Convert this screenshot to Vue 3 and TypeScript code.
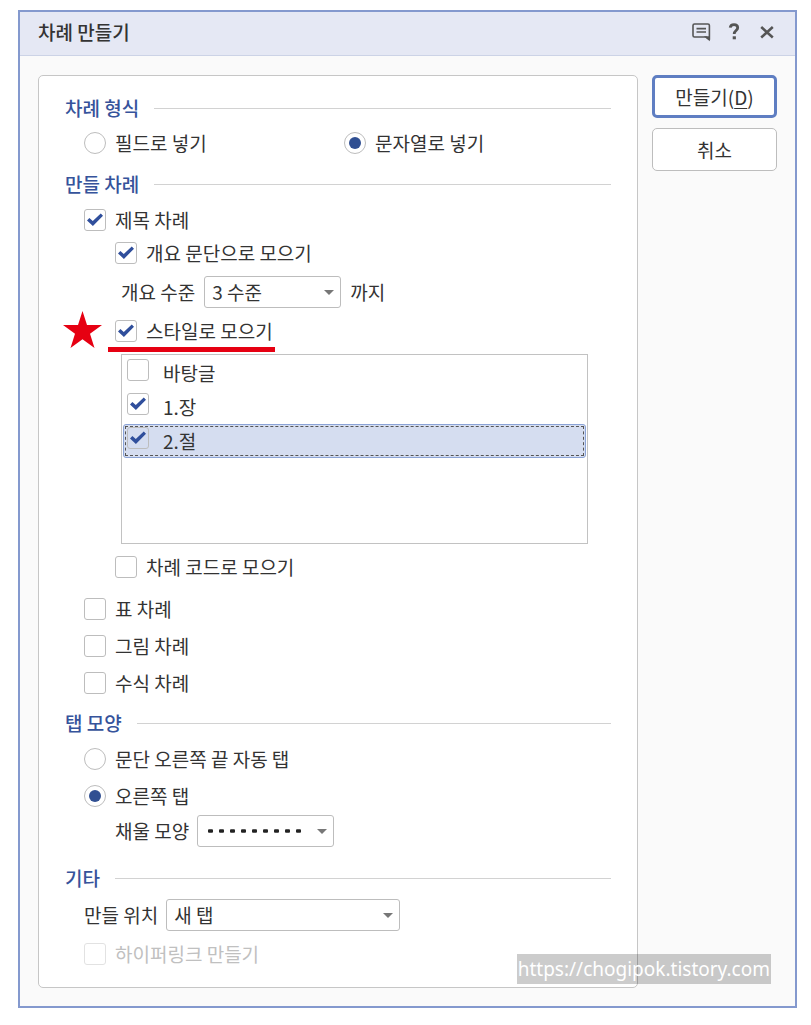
<script setup lang="ts">
import { ref } from 'vue'

interface StyleItem {
  id: string
  name: string
  checked: boolean
}

const format = ref<'field' | 'string'>('string')
const titleToc = ref(true)
const byOutline = ref(true)
const byStyle = ref(true)
const byCode = ref(false)
const level = ref('3 수준')
const levels = ['1 수준', '2 수준', '3 수준', '4 수준', '5 수준']
const styles = ref<StyleItem[]>([
  { id: 'normal', name: '바탕글', checked: false },
  { id: 'chapter', name: '1.장', checked: true },
  { id: 'section', name: '2.절', checked: true },
])
const selected = ref('section')
const others = ref([
  { id: 'table', name: '표 차례', checked: false },
  { id: 'figure', name: '그림 차례', checked: false },
  { id: 'equation', name: '수식 차례', checked: false },
])
const tab = ref<'auto' | 'right'>('right')
const place = ref('새 탭')
const hyperlink = ref(false)
</script>

<template>
  <div class="page">
    <section class="dialog" role="dialog" aria-labelledby="dialog-title">
      <header class="titlebar">
        <h1 id="dialog-title">차례 만들기</h1>
        <div class="tools">
          <button type="button" aria-label="의견">
            <svg width="20" height="20" viewBox="0 0 20 20" fill="none" stroke="#555" stroke-width="1.6">
              <path d="M3.5 2h13.400q1.500 0 1.500 1.500v14l-3.400-2.500H3.500Q2 15 2 13.500V3.500Q2 2 3.500 2Z" stroke-linejoin="round" />
              <path d="M5.500 6.600h9.500M5.500 10h9.500" />
              <path d="M15 15l3 2.500V15Z" fill="#555" />
            </svg>
          </button>
          <button type="button" aria-label="도움말">
            <svg width="20" height="20" viewBox="0 0 20 20" fill="none" stroke="#555" stroke-width="2.800">
              <path d="M6.200 5.600C6.500 3.200 8 2.600 10 2.600c2.300 0 3.700 1.200 3.700 3.100 0 2.900-3.500 2.800-3.500 6.300" />
              <path d="M8.700 15.800h3.200" stroke-width="3" />
            </svg>
          </button>
          <button type="button" aria-label="닫기">
            <svg width="20" height="20" viewBox="0 0 20 20" fill="none" stroke="#555" stroke-width="2.500">
              <path d="M4.200 5l11.600 10.500M15.800 5L4.200 15.500" />
            </svg>
          </button>
        </div>
      </header>

      <main class="body">
        <form class="panel" @submit.prevent>
          <h2 class="heading">차례 형식</h2>
          <div class="row formats">
            <label class="option"><input v-model="format" type="radio" name="format" value="field" />필드로 넣기</label>
            <label class="option"><input v-model="format" type="radio" name="format" value="string" />문자열로 넣기</label>
          </div>

          <h2 class="heading second">만들 차례</h2>
          <div class="row"><label class="option"><input v-model="titleToc" type="checkbox" />제목 차례</label></div>
          <div class="nested">
            <label class="option"><input v-model="byOutline" type="checkbox" />개요 문단으로 모으기</label>
            <div class="field level">
              <label for="level">개요 수준</label>
              <span class="combo">
                <select id="level" v-model="level">
                  <option v-for="l in levels" :key="l">{{ l }}</option>
                </select>
              </span>
              <span>까지</span>
            </div>
            <div class="marked">
              <svg class="star" width="40" height="38" viewBox="0 0 40 38" aria-hidden="true">
                <path d="M19.500 0L24 14H39L27 22.800L31.500 37L19.500 28.300L7.500 37L12 22.800L0 14H15Z" fill="#e60012" />
              </svg>
              <label class="option"><input v-model="byStyle" type="checkbox" />스타일로 모으기</label>
            </div>
            <ul class="list">
              <li
                v-for="s in styles"
                :key="s.id"
                :class="{ selected: s.id === selected }"
                @click="selected = s.id"
              >
                <label><input v-model="s.checked" type="checkbox" />{{ s.name }}</label>
              </li>
            </ul>
            <label class="option"><input v-model="byCode" type="checkbox" />차례 코드로 모으기</label>
          </div>
          <div class="others">
            <label v-for="o in others" :key="o.id" class="option"><input v-model="o.checked" type="checkbox" />{{ o.name }}</label>
          </div>

          <h2 class="heading third">탭 모양</h2>
          <div class="tabs">
            <label class="option"><input v-model="tab" type="radio" name="tab" value="auto" />문단 오른쪽 끝 자동 탭</label>
            <label class="option"><input v-model="tab" type="radio" name="tab" value="right" />오른쪽 탭</label>
          </div>
          <div class="field fill">
            <label for="fill">채울 모양</label>
            <span class="combo">
              <select id="fill">
                <option value="dotted" aria-label="점선"></option>
              </select>
              <svg class="dots" width="96" height="4" viewBox="0 0 96 4" aria-hidden="true">
                <rect v-for="n in 9" :key="n" :x="(n - 1) * 11" y="0.300" width="5" height="3.400" rx="1" fill="#222" />
              </svg>
            </span>
          </div>

          <h2 class="heading fourth">기타</h2>
          <div class="field place">
            <label for="place">만들 위치</label>
            <span class="combo">
              <select id="place" v-model="place">
                <option>새 탭</option>
                <option>현재 문서</option>
              </select>
            </span>
          </div>
          <div class="link"><label class="option disabled"><input v-model="hyperlink" type="checkbox" disabled />하이퍼링크 만들기</label></div>
        </form>

        <aside class="actions">
          <button type="button" class="primary">만들기(<u>D</u>)</button>
          <button type="button">취소</button>
        </aside>
      </main>
      <a class="watermark" href="https://chogipok.tistory.com">https://chogipok.tistory.com</a>
    </section>
  </div>
</template>

<style>
body {
  margin: 0;
  background: #fff;
}
</style>

<style scoped>
* {
  box-sizing: border-box;
}
.page {
  padding: 10px 14px 16px 18px;
  font-family: "Noto Sans CJK KR", "Noto Sans", sans-serif;
  font-size: 19px;
  line-height: 28px;
  color: #333;
}
.dialog {
  position: relative;
  border: 2px solid #8499ce;
  background: #fafafa;
}
.titlebar {
  display: flex;
  align-items: flex-start;
  justify-content: space-between;
  height: 44px;
  padding: 6px 18px 0;
  background: #e5e8f4;
  border-bottom: 1px solid #ccd3e6;
}
h1,
h2 {
  margin: 0;
  font-size: inherit;
  font-weight: 500;
}
.tools {
  display: flex;
  gap: 13px;
}
.tools button {
  display: flex;
  align-items: center;
  height: 28px;
  padding: 0;
  border: 0;
  background: none;
}
.body {
  display: flex;
  align-items: flex-start;
  gap: 14px;
  padding: 19px 18px 18px;
}
.panel {
  flex: 1;
  min-width: 0;
  padding: 18px 26px 19px;
  background: #fff;
  border: 1px solid #c6c6c6;
  border-radius: 5px;
}
.heading {
  display: flex;
  align-items: center;
  gap: 15px;
  color: #36539b;
}
.heading::after {
  content: "";
  flex: 1;
  height: 1px;
  background: #d2d2d2;
}
.second {
  margin-top: 13px;
}
.third {
  margin-top: 12px;
}
.fourth {
  margin-top: 17px;
}
.row {
  margin: 7px 0 0 19px;
}
.second + .row {
  margin-top: 8px;
}
.formats {
  display: grid;
  grid-template-columns: 260px 1fr;
}
.option {
  display: flex;
  align-items: center;
  gap: 9px;
  width: fit-content;
  white-space: nowrap;
}
input {
  appearance: none;
  flex: none;
  display: grid;
  place-content: center;
  width: 22px;
  height: 22px;
  margin: 0;
  border: 1px solid #bdbdbd;
  border-radius: 3px;
  background: #fff;
}
input[type="radio"] {
  border-radius: 50%;
}
input[type="radio"]:checked::before {
  content: "";
  width: 12px;
  height: 12px;
  border-radius: 50%;
  background: #304f92;
}
input[type="checkbox"]:checked::before {
  content: "";
  width: 16px;
  height: 14px;
  background: #304f9c;
  clip-path: polygon(0 53%, 15% 36%, 36% 58%, 86% 4%, 100% 20%, 37% 92%);
}
.nested {
  display: flex;
  flex-direction: column;
  gap: 9px;
  margin: 5px 0 0 50px;
}
.field {
  display: flex;
  align-items: center;
  gap: 8px;
}
.level {
  gap: 9px;
  margin-left: 6px;
}
.combo {
  position: relative;
  display: flex;
}
.combo::after {
  content: "";
  position: absolute;
  right: 7px;
  top: 14px;
  border: 5px solid transparent;
  border-top-color: #777;
  border-bottom: 0;
  pointer-events: none;
}
select {
  appearance: none;
  width: 137px;
  height: 32px;
  padding: 0 24px 0 7px;
  font: inherit;
  color: inherit;
  background: #fff;
  border: 1px solid #bdbdbd;
  border-radius: 3px;
}
.place select {
  width: 234px;
}
.dots {
  position: absolute;
  left: 11px;
  top: 14px;
  pointer-events: none;
}
.marked {
  position: relative;
  width: fit-content;
}
.marked::after {
  content: "";
  position: absolute;
  left: -7px;
  right: -2px;
  bottom: -7px;
  height: 5px;
  background: #e60012;
}
.star {
  position: absolute;
  left: -52px;
  top: -6px;
}
.list {
  height: 190px;
  margin: 0 23px 0 6px;
  padding: 1px;
  list-style: none;
  border: 1px solid #c2c2c2;
}
.list li {
  height: 34px;
  padding: 0 4px;
}
.list label {
  display: flex;
  gap: 14px;
  line-height: 34px;
}
.list input {
  margin-top: 3px;
}
.list .selected {
  padding: 1px;
  border: 1px solid #8ba3d6;
  border-radius: 3px;
  background: #d5ddf0;
}
.list .selected label {
  height: 30px;
  padding: 0 1px;
  line-height: 28px;
  border: 1px dashed #555;
}
.list .selected input {
  margin-top: 0;
  background: transparent;
}
.others {
  display: flex;
  flex-direction: column;
  gap: 9px;
  margin: 14px 0 0 19px;
}
.tabs {
  display: flex;
  flex-direction: column;
  gap: 9px;
  margin: 8px 0 0 19px;
}
.fill {
  margin: 5px 0 0 50px;
}
.place {
  margin: 7px 0 0 19px;
}
.link {
  margin: 9px 0 0 19px;
}
.disabled {
  color: #c0c0c0;
}
.disabled input {
  border-color: #e2e2e2;
}
.actions {
  display: flex;
  flex-direction: column;
  gap: 10px;
  width: 125px;
}
.actions button {
  height: 43px;
  padding: 0;
  font: inherit;
  color: inherit;
  background: #fff;
  border: 1px solid #bdbdbd;
  border-radius: 5px;
}
.actions .primary {
  border: 3px solid #5f7ec2;
}
u {
  text-underline-offset: 3px;
}
.watermark {
  position: absolute;
  right: 24px;
  bottom: 22px;
  padding: 0 1px;
  font-family: "Noto Sans", sans-serif;
  font-size: 19px;
  line-height: 30px;
  color: #fff;
  text-decoration: none;
  background: rgba(0, 0, 0, 0.2);
}
</style>
